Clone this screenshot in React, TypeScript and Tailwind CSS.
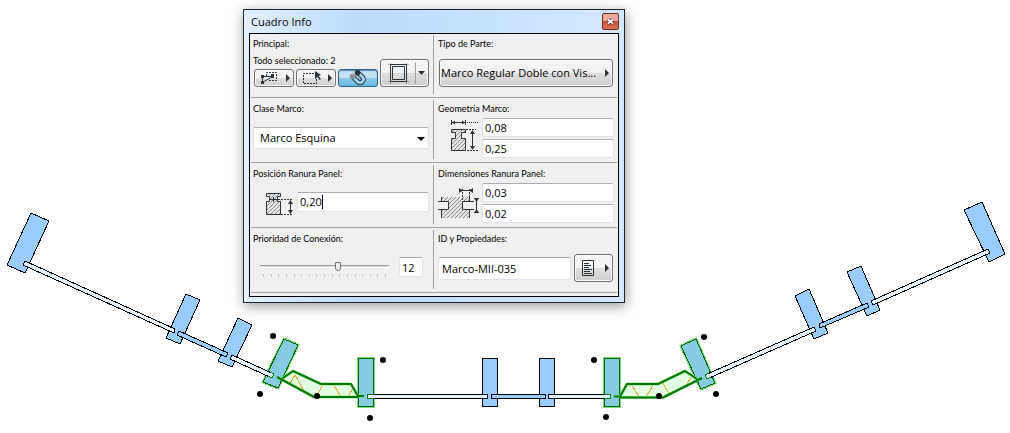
import { useState } from "react";
import type { ReactNode } from "react";

const buttonFace =
  "flex items-center rounded-[3px] border border-[#707070] bg-linear-to-b from-[#f3f3f3] from-50% via-[#dedede] via-50% to-[#cfcfcf] shadow-[inset_0_0_0_1px_#fbfbfb]";
const fieldFace =
  "min-w-0 rounded-[2px] border border-[#e2e3ea] border-t-[#abadb3] bg-white text-[11px] leading-4 text-black outline-none";
const caption = "block font-['Lato',sans-serif] text-[9px] leading-3 whitespace-nowrap";

interface CellProps {
  title: string;
  htmlFor?: string;
  children: ReactNode;
}

function Cell({ title, htmlFor, children }: CellProps) {
  return (
    <div className="min-w-0">
      <label htmlFor={htmlFor} className={caption}>
        {title}
      </label>
      {children}
    </div>
  );
}

function Row({ left, right }: { left: ReactNode; right: ReactNode }) {
  return (
    <div className="mx-px flex h-[65px] border-b border-[#a0a0a0] pt-0.5 pb-[3px]">
      <div className="w-[183px] border-r border-[#a0a0a0] pt-[3px] pr-1 pl-0.5">{left}</div>
      <div className="min-w-0 flex-1 pt-[3px] pr-[3px] pl-1">{right}</div>
    </div>
  );
}

function RightArrow() {
  return (
    <svg width="4" height="8" viewBox="0 0 4 8" className="shrink-0">
      <path d="M0 0L4 4L0 8Z" fill="#2b3238" />
    </svg>
  );
}

function Hatch({ id }: { id: string }) {
  return (
    <defs>
      <pattern id={id} width="4" height="4" patternUnits="userSpaceOnUse">
        <rect width="4" height="4" fill="#e4e4e4" stroke="none" />
        <path d="M-1 5L5 -1M-1 1L1 -1M3 5L5 3" stroke="#8c8c8c" strokeWidth="1" />
      </pattern>
    </defs>
  );
}

function PolyIcon() {
  return (
    <svg width="18" height="14" viewBox="0 0 18 14" fill="none" stroke="#2b3238">
      <path d="M6.5 5V1.5H16.5V9.5H8" strokeDasharray="2 1" />
      <path d="M2.5 5.5L12.5 5.5L2.5 11.5Z" />
      <path d="M1 4H4V7H1ZM11 3H14V7H11ZM1 10H4V13H1Z" fill="#2b3238" stroke="none" />
    </svg>
  );
}

function MarqueeIcon() {
  return (
    <svg width="20" height="14" viewBox="0 0 20 14" fill="none" stroke="#2b3238">
      <path d="M12 2.5H1.5V12.5H14.5V8" strokeDasharray="2 1" />
      <path d="M13 0L19 4L16.5 5L19 8L17.5 9L15.5 6L13 8Z" fill="#2b3238" stroke="none" />
    </svg>
  );
}

function MagnetIcon() {
  return (
    <svg width="18" height="16" viewBox="0 0 18 16" fill="none">
      <path d="M4 7L8.5 11.5C10 13 12 13 13.5 11.5C15 10 14.5 8 13 6.5L8.5 2.5" stroke="#2b3238" strokeWidth="5" />
      <path d="M4 7L8.5 11.5C10 13 12 13 13.5 11.5C15 10 14.5 8 13 6.5L8.5 2.5" stroke="#9dd2ee" strokeWidth="3" />
      <circle cx="3.5" cy="6.5" r="2.8" fill="#8c9296" />
      <circle cx="8.5" cy="2.8" r="2.8" fill="#2b3238" />
    </svg>
  );
}

function FrameIcon() {
  return (
    <svg width="21" height="21" viewBox="0 0 21 21" fill="none" stroke="#2b3238">
      <path d="M0 1.5H21M0 18.5H21M2.5 0V21M18.5 0V21" strokeOpacity="0.35" />
      <path d="M2.5 1.5H18.5V18.5H2.5Z" />
      <path d="M4.5 3.5H16.5V16.5H4.5Z" />
    </svg>
  );
}

function GeometryIcon() {
  return (
    <svg width="30" height="36" viewBox="0 0 30 36" fill="none" stroke="#2b3238" className="shrink-0">
      <Hatch id="hatch-geometry" />
      <path d="M1.5 11.5H15.5V14.5H11.5V20.5H15.5V32.5H1.5V20.5H5.5V14.5H1.5Z" fill="url(#hatch-geometry)" />
      <path d="M1.5 2V7M15.5 2V7M2 4.5H15" />
      <path d="M2 4.5L5 2.5V6.5ZM15 4.5L12 2.5V6.5Z" fill="#2b3238" stroke="none" />
      <path d="M17 4.5H29" strokeDasharray="1 1" />
      <path d="M16 11.5H26M17 32.5H29" strokeDasharray="2 1" />
      <path d="M22.5 13V31" />
      <path d="M22.5 12L20 16H25ZM22.5 32L20 28H25Z" fill="#2b3238" stroke="none" />
    </svg>
  );
}

function PositionIcon() {
  return (
    <svg width="30" height="25" viewBox="0 0 30 25" fill="none" stroke="#2b3238" className="shrink-0">
      <Hatch id="hatch-position" />
      <path d="M1.5 1.5H15.5V4.5H12.5V9.5H15.5V22.5H1.5V9.5H4.5V4.5H1.5Z" fill="url(#hatch-position)" />
      <path d="M8.5 5V10M5 7.5H12" />
      <path d="M13 7.5H28M16 22.5H28" strokeDasharray="2 1" />
      <path d="M25.5 9V21" />
      <path d="M25.5 8L23 12H28ZM25.5 22L23 18H28Z" fill="#2b3238" stroke="none" />
    </svg>
  );
}

function SlotIcon() {
  return (
    <svg width="42" height="33" viewBox="0 0 42 33" fill="none" stroke="#2b3238" className="shrink-0">
      <Hatch id="hatch-slot" />
      <path
        d="M3 10H32V14H24V23H32V31H3V23H11V14H3Z"
        fill="url(#hatch-slot)"
        stroke="none"
      />
      <path d="M3.5 10V14.5M3.5 22.5V31M31.5 10V14.5M31.5 22.5V31" />
      <path d="M0 14.5H10.5V22.5H0M36 14.5H24.5V22.5H36" />
      <path d="M24.5 2V14M31.5 2V14" strokeDasharray="2 1" />
      <path d="M21 3.5H35" />
      <path d="M21 1V6L25 3.5ZM35 1V6L31 3.5Z" fill="#2b3238" stroke="none" />
      <path d="M38.5 12V25M36 11.5H41M36 25.5H41" />
      <path d="M36 11H41L38.5 15ZM36 26H41L38.5 22Z" fill="#2b3238" stroke="none" />
    </svg>
  );
}

function DocumentIcon() {
  return (
    <svg width="12" height="16" viewBox="0 0 12 16" fill="none" stroke="#2b3238">
      <path d="M0.5 0.5H11.5V15.5H0.5Z" />
      <path d="M2 3.5H7M2 5.5H9M2 7.5H7M2 9.5H10M2 11.5H8M2 13.5H10" />
    </svg>
  );
}

const posts = [
  "31,213 49,221 25,273 7,265",
  "186,294 200,300 180,344 166,338",
  "238,318 252,325 232,367 218,361",
  "482.5,358.5 497.5,358.5 497.5,406.5 482.5,406.5",
  "539.5,358.5 554.5,358.5 554.5,406.5 539.5,406.5",
  "809,289 828,333 814,339 795,296",
  "861,266 880,310 867,316 847,272",
  "982,202 1005,254 989,262 964,210",
];

const selectedPosts = [
  "284,339 298,345 278,388 263,382",
  "358.5,358.5 373.5,358.5 373.5,406.5 358.5,406.5",
  "604.5,358.5 619.5,358.5 619.5,406.5 604.5,406.5",
  "696,339 715,383 701,389 681,346",
];

const panels = [
  "25,261 175,329 174,333 23,265",
  "232,355 274,374 272,378 230,359",
  "367.5,394.5 487.5,394.5 487.5,398.5 367.5,398.5",
  "548.5,394.5 610.5,394.5 610.5,398.5 548.5,398.5",
  "705,375 814,327 816,331 707,379",
  "871,301 988,249 990,253 873,305",
];

const joints = [
  "179,331 228,353 226,357 177,335",
  "491.5,394.5 545.5,394.5 545.5,398.5 491.5,398.5",
  "819,324 867,303 869,307 820,328",
];

const corners = [
  "283,378 293,371 321,384 351,384 358,396 358,398 317,398",
  "621,395 627,384 658,384 685,371 697,379 663,398 620,398",
];

const handles = [
  [273, 336], [260, 394], [317, 396], [383, 360], [370, 418],
  [594, 360], [606, 417], [659, 396], [704, 337], [716, 394],
];

function FloorPlan() {
  return (
    <svg viewBox="0 0 1010 433" className="block h-auto w-full" shapeRendering="crispEdges">
      <g fill="#99ccff" stroke="#000">
        {posts.map((p) => <polygon key={p} points={p} />)}
      </g>
      {selectedPosts.map((p) => (
        <g key={p}>
          <polygon points={p} fill="none" stroke="#7be07b" strokeWidth="3" />
          <polygon points={p} fill="#87cbe3" stroke="#006400" />
        </g>
      ))}
      <g fill="#e3f2fd" stroke="#000">
        {panels.map((p) => <polygon key={p} points={p} />)}
      </g>
      <g fill="#99ccff" stroke="#000">
        {joints.map((p) => <polygon key={p} points={p} />)}
      </g>
      {/* slot ends inside the selected posts */}
      <g fill="none" stroke="#0a7a0a">
        <path d="M270 372L274 374L272 378L268 376" />
        <path d="M374 394.5H367.5V398.5H374" />
        <path d="M604 394.5H610.5V398.5H604" />
        <path d="M709 373L705 375L707 379L711 377" />
      </g>
      <g fill="#e3fde3">
        {corners.map((p) => <polygon key={p} points={p} />)}
      </g>
      <path
        d="M289 385L295 375L304 391M322 386L317 396M334 385L341 397M353 388L348 397M632 385L639 397M653 385L646 397M663 383L669 394M691 377L686 386"
        fill="none"
        stroke="#dcaa1e"
      />
      <g fill="none" strokeLinejoin="round" shapeRendering="auto">
        <g stroke="#8ae68a" strokeWidth="3">
          <path d="M283 378L293 371L321 384H351L358 396H364" />
          <path d="M277 377L314 397H358" />
          <path d="M614 396.5H620L627 384H658L685 371L697 379" />
          <path d="M620 397.5H663L702 378" />
        </g>
        <g stroke="#007800" strokeWidth="2">
          <path d="M283 378L293 371L321 384H351L358 396H364" />
          <path d="M277 377L314 397H358" />
          <path d="M614 396.5H620L627 384H658L685 371L697 379" />
          <path d="M620 397.5H663L702 378" />
        </g>
      </g>
      <g shapeRendering="auto">
        {handles.map(([x, y]) => <circle key={`${x}-${y}`} cx={x} cy={y} r="3" />)}
      </g>
    </svg>
  );
}

export default function App() {
  const [frameClass, setFrameClass] = useState("Marco Esquina");
  const [width, setWidth] = useState("0,08");
  const [height, setHeight] = useState("0,25");
  const [position, setPosition] = useState("0,20");
  const [slotWidth, setSlotWidth] = useState("0,03");
  const [slotDepth, setSlotDepth] = useState("0,02");
  const [priority, setPriority] = useState(12);
  const [partId, setPartId] = useState("Marco-MII-035");

  return (
    <main className="relative min-h-screen overflow-hidden bg-white font-['Open_Sans',sans-serif] text-black">
      <FloorPlan />

      {/* Floating info palette */}
      <section className="absolute top-[9px] left-[243px] w-[382px] border border-[#1c2430] bg-linear-to-r from-[#e2f0ff] via-[#bbdcfe] via-30% to-[#d3e8ff] px-[5px] pb-[5px] shadow-[1px_3px_12px_rgba(0,0,0,0.4)]">
        <header className="flex h-[23px] items-center justify-between pl-0.5">
          <h1 className="text-[11px] leading-4">Cuadro Info</h1>
          <button
            aria-label="Cerrar"
            className="flex h-[17px] w-[17px] items-center justify-center rounded-[2px] border border-[#6b2a22] bg-linear-to-b from-[#eba999] from-45% via-[#c64b33] via-50% to-[#d9785a]"
          >
            <svg width="9" height="9" viewBox="0 0 9 9">
              <path d="M2 2.5L7 6.5M7 2.5L2 6.5" stroke="#4a3030" strokeWidth="3.4" />
              <path d="M2 2.5L7 6.5M7 2.5L2 6.5" stroke="#fff" strokeWidth="1.8" />
            </svg>
          </button>
        </header>

        <div className="border border-black bg-[#f0f0f0] pb-[3px]">
          <div className="-mt-px">
            <Row
              left={
                <div className="flex items-end justify-between">
                  <div>
                    <p className={caption}>Principal:</p>
                    <div className="pt-[5px]">
                      <p className={caption}>Todo seleccionado: 2</p>
                    </div>
                    <div className="mt-0.5 ml-px flex gap-0.5">
                      <button aria-label="Selección" className={`${buttonFace} h-[18px] w-10 justify-between pr-[3px] pl-[5px]`}>
                        <PolyIcon />
                        <RightArrow />
                      </button>
                      <button aria-label="Marquesina" className={`${buttonFace} h-[18px] w-10 justify-between pr-[3px] pl-[5px]`}>
                        <MarqueeIcon />
                        <RightArrow />
                      </button>
                      <button
                        aria-label="Imán"
                        className="flex h-[18px] w-10 items-center justify-center rounded-[3px] border border-[#2c628b] bg-linear-to-b from-[#c2e2f4] from-50% via-[#8ccbec] via-50% to-[#6cb6e0] shadow-[inset_0_1px_1px_#5c8cab]"
                      >
                        <MagnetIcon />
                      </button>
                    </div>
                  </div>
                  <button aria-label="Tipo de marco" className={`${buttonFace} h-7 w-[49px] justify-between pr-[3px] pl-[7px]`}>
                    <FrameIcon />
                    <span className="flex h-[22px] items-center border-l border-[#a0a0a0] pl-0.5">
                      <svg width="7" height="4" viewBox="0 0 7 4">
                        <path d="M0 0H7L3.5 4Z" fill="#2b3238" />
                      </svg>
                    </span>
                  </button>
                </div>
              }
              right={
                <div>
                  <p className={caption}>Tipo de Parte:</p>
                  <button
                    className={`${buttonFace} mt-[9px] ml-px h-7 w-[174px] justify-between pr-[3px] pl-px text-[11px] leading-4 whitespace-nowrap`}
                  >
                    <span>Marco Regular Doble con Vis...</span>
                    <RightArrow />
                  </button>
                </div>
              }
            />
            <Row
              left={
                <Cell title="Clase Marco:" htmlFor="frame-class">
                  <div className="relative mt-3">
                    <select
                      id="frame-class"
                      value={frameClass}
                      onChange={(e) => setFrameClass(e.target.value)}
                      className={`${fieldFace} block h-[22px] w-full appearance-none pl-1.5`}
                    >
                      <option>Marco Esquina</option>
                      <option>Marco Regular</option>
                    </select>
                    <svg width="8" height="4" viewBox="0 0 8 4" className="pointer-events-none absolute top-[10px] right-1">
                      <path d="M0 0H8L4 4Z" />
                    </svg>
                  </div>
                </Cell>
              }
              right={
                <Cell title="Geometría Marco:" htmlFor="frame-width">
                  <div className="mt-[3px] flex justify-end gap-0.5">
                    <GeometryIcon />
                    <div className="flex w-[132px] flex-col gap-0.5">
                      <input id="frame-width" value={width} onChange={(e) => setWidth(e.target.value)} className={`${fieldFace} h-[19px] px-0.5`} />
                      <input aria-label="Altura" value={height} onChange={(e) => setHeight(e.target.value)} className={`${fieldFace} h-[19px] px-0.5`} />
                    </div>
                  </div>
                </Cell>
              }
            />
            <Row
              left={
                <Cell title="Posición Ranura Panel:" htmlFor="slot-position">
                  <div className="mt-3 flex justify-end gap-0.5">
                    <PositionIcon />
                    <span className={`${fieldFace} flex h-5 w-[132px] items-center border-[#b5cfe7] border-t-[#3d7bad] px-0.5`}>
                      <input
                        id="slot-position"
                        value={position}
                        onChange={(e) => setPosition(e.target.value)}
                        className="field-sizing-content leading-4 outline-none"
                      />
                      <span className="h-3.5 w-px bg-black" />
                    </span>
                  </div>
                </Cell>
              }
              right={
                <Cell title="Dimensiones Ranura Panel:" htmlFor="slot-width">
                  <div className="mt-[3px] flex items-center justify-end gap-0.5">
                    <SlotIcon />
                    <div className="flex w-[132px] flex-col gap-0.5">
                      <input id="slot-width" value={slotWidth} onChange={(e) => setSlotWidth(e.target.value)} className={`${fieldFace} h-[19px] px-0.5`} />
                      <input aria-label="Profundidad" value={slotDepth} onChange={(e) => setSlotDepth(e.target.value)} className={`${fieldFace} h-[19px] px-0.5`} />
                    </div>
                  </div>
                </Cell>
              }
            />
            <Row
              left={
                <Cell title="Prioridad de Conexión:" htmlFor="priority">
                  <div className="mt-3 flex items-start gap-2.5 pl-[7px]">
                    <div className="w-[129px] pt-1">
                      <input
                        id="priority"
                        type="range"
                        min={1}
                        max={19}
                        value={priority}
                        onChange={(e) => setPriority(Number(e.target.value))}
                        className="block h-2.5 w-full appearance-none bg-transparent [&::-webkit-slider-runnable-track]:h-[3px] [&::-webkit-slider-runnable-track]:border-t [&::-webkit-slider-runnable-track]:border-b [&::-webkit-slider-runnable-track]:border-t-[#9a9a9a] [&::-webkit-slider-runnable-track]:border-b-white [&::-webkit-slider-runnable-track]:bg-[#dcdcdc] [&::-webkit-slider-thumb]:-mt-1 [&::-webkit-slider-thumb]:h-[9px] [&::-webkit-slider-thumb]:w-1.5 [&::-webkit-slider-thumb]:appearance-none [&::-webkit-slider-thumb]:rounded-b-[3px] [&::-webkit-slider-thumb]:border [&::-webkit-slider-thumb]:border-[#707070] [&::-webkit-slider-thumb]:bg-[#f0f0f0]"
                      />
                      <div className="mt-[3px] flex justify-between px-[3px]">
                        {Array.from({ length: 17 }, (_, i) => (
                          <span key={i} className="h-[3px] w-px bg-[#c0c0c0]" />
                        ))}
                      </div>
                    </div>
                    <input
                      aria-label="Valor de prioridad"
                      value={priority}
                      onChange={(e) => setPriority(Number(e.target.value) || 1)}
                      className={`${fieldFace} h-5 w-6 px-0.5`}
                    />
                  </div>
                </Cell>
              }
              right={
                <Cell title="ID y Propiedades:" htmlFor="part-id">
                  <div className="mt-[9px] flex items-center gap-[3px]">
                    <input id="part-id" value={partId} onChange={(e) => setPartId(e.target.value)} className={`${fieldFace} h-[23px] w-[133px] px-[3px]`} />
                    <button aria-label="Propiedades" className={`${buttonFace} h-7 w-[39px] justify-between pr-[3px] pl-[7px]`}>
                      <DocumentIcon />
                      <RightArrow />
                    </button>
                  </div>
                </Cell>
              }
            />
          </div>
        </div>
      </section>
    </main>
  );
}
